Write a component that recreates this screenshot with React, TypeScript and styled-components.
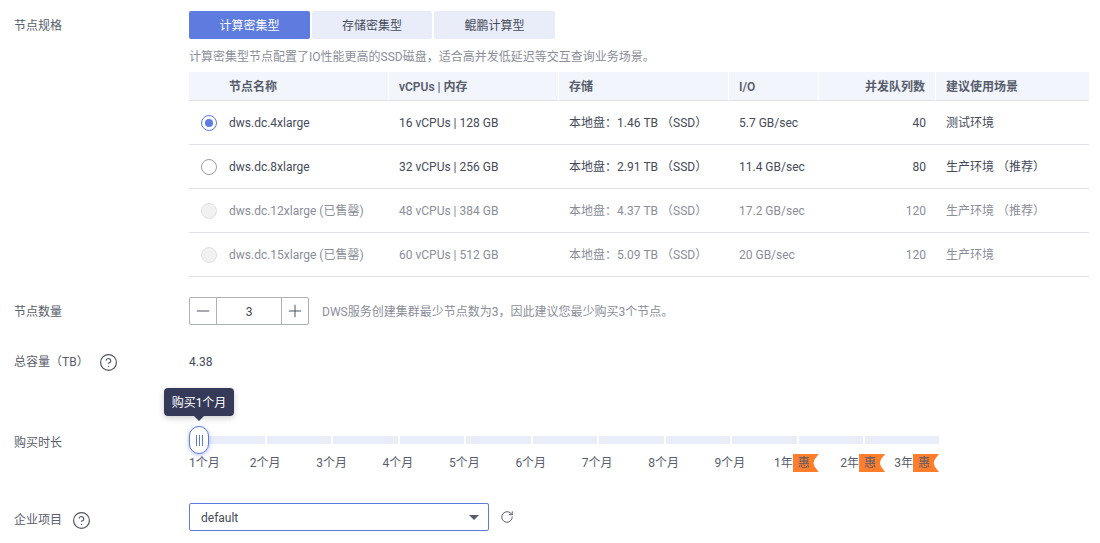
import React from 'react';
import { createGlobalStyle, styled } from 'styled-components';
import { CircleHelp, Minus, Plus, RotateCw } from 'lucide-react';

const GlobalStyle = createGlobalStyle`
    html, body {
        margin: 0;
        padding: 0;
        background: #fff;
    }
    body {
        font-family: Roboto, 'Noto Sans CJK SC', sans-serif;
        font-size: 12px;
        line-height: 20px;
        color: #454a59;
    }
`;

const Page = styled.div`
    width: 1100px;
    height: 543px;
    overflow: hidden;
    box-sizing: border-box;
    padding: 11px 11px 0 14px;
    display: flex;
    flex-direction: column;
`;

const FormRow = styled.div<{ $gap: number }>`
    display: flex;
    align-items: flex-start;
    margin-bottom: ${({ $gap }) => $gap}px;
`;

const Label = styled.div<{ $top?: number }>`
    width: 175px;
    flex: none;
    display: flex;
    align-items: center;
    color: #575d6c;
    padding-top: ${({ $top }) => $top ?? 0}px;
`;

const LabelText = styled.span`
    padding-top: 0;
`;

const HelpIcon = styled(CircleHelp)`
    flex: none;
    margin-left: 10px;
    color: #4f5564;
`;

const Field = styled.div`
    flex: 1;
    min-width: 0;
`;

const Tabs = styled.div`
    display: flex;
    gap: 2px;
`;

const Tab = styled.div<{ $active?: boolean; $width: number }>`
    width: ${({ $width }) => $width}px;
    height: 28px;
    line-height: 30px;
    text-align: center;
    border-radius: 2px;
    background: ${({ $active }) => ($active ? '#5e7ce0' : '#e9edfa')};
    color: ${({ $active }) => ($active ? '#fff' : '#454a59')};
`;

const Description = styled.div`
    margin: 8px 0 5px;
    color: #8a8e99;
`;

const SpecGrid = styled.div`
    display: grid;
    grid-template-columns: 30px 170px 170px 170px 90px 117px 153px;
    width: 900px;
`;

const HeadCell = styled.div<{ $right?: boolean; $sep?: boolean }>`
    height: 28px;
    line-height: 30px;
    padding: 0 10px;
    background: #f2f5fc;
    border-bottom: 1px solid #dfe1e6;
    border-right: ${({ $sep }) => ($sep ? '1px solid #fff' : 'none')};
    font-weight: 600;
    color: #575d6c;
    text-align: ${({ $right }) => ($right ? 'right' : 'left')};
    min-width: 0;
    white-space: nowrap;
`;

const BodyCell = styled.div<{ $right?: boolean; $disabled?: boolean }>`
    height: 43px;
    line-height: 45px;
    padding: 0 10px;
    border-bottom: 1px solid #dfe1e6;
    color: ${({ $disabled }) => ($disabled ? '#8a8e99' : '#454a59')};
    text-align: ${({ $right }) => ($right ? 'right' : 'left')};
    min-width: 0;
    white-space: nowrap;
`;

const RadioCell = styled.div`
    height: 42px;
    padding: 1px 0 0 12px;
    display: flex;
    align-items: center;
    border-bottom: 1px solid #dfe1e6;
`;

const Radio = styled.span<{ $checked?: boolean; $disabled?: boolean }>`
    width: 16px;
    height: 16px;
    flex: none;
    box-sizing: border-box;
    border-radius: 50%;
    display: flex;
    align-items: center;
    justify-content: center;
    background: ${({ $disabled }) => ($disabled ? '#f1f1f3' : '#fff')};
    border: 1px solid ${({ $checked, $disabled }) => ($checked ? '#5e7ce0' : $disabled ? '#dfe1e6' : '#9a9ea8')};

    &::after {
        content: '';
        display: ${({ $checked }) => ($checked ? 'block' : 'none')};
        width: 8px;
        height: 8px;
        border-radius: 50%;
        background: #5e7ce0;
    }
`;

const StepperLine = styled.div`
    display: flex;
    align-items: center;
    gap: 13px;
`;

const Stepper = styled.div`
    width: 120px;
    height: 28px;
    box-sizing: border-box;
    display: flex;
    border: 1px solid #adb0b8;
    border-radius: 2px;
`;

const StepButton = styled.span`
    width: 26px;
    flex: none;
    display: flex;
    align-items: center;
    justify-content: center;
    color: #4f5564;
`;

const StepValue = styled.span`
    flex: 1;
    text-align: center;
    line-height: 28px;
    height: 26px;
    border-left: 1px solid #adb0b8;
    border-right: 1px solid #adb0b8;
`;

const Hint = styled.span`
    padding-top: 2px;
    color: #8a8e99;
`;

const Slider = styled.div`
    position: relative;
    width: 750px;
`;

const Track = styled.div`
    height: 28px;
    padding-left: 11.25px;
    display: flex;
    align-items: center;
    gap: 2px;
`;

const Segment = styled.span<{ $last?: boolean }>`
    flex: ${({ $last }) => ($last ? '1' : 'none')};
    width: 64.5px;
    height: 8px;
    background: #e9edfa;
`;

const Thumb = styled.div`
    position: absolute;
    left: 0;
    top: 0;
    width: 20px;
    height: 28px;
    box-sizing: border-box;
    display: flex;
    align-items: center;
    justify-content: center;
    gap: 2px;
    background: #fff;
    border: 1px solid #5e7ce0;
    border-radius: 10px;
    box-shadow: 0 1px 4px rgba(94, 124, 224, 0.5);
`;

const ThumbBar = styled.span`
    width: 1px;
    height: 11px;
    background: #5e7ce0;
`;

const Tooltip = styled.div`
    position: absolute;
    left: -25px;
    top: -38px;
    width: 70px;
    height: 28px;
    line-height: 30px;
    text-align: center;
    border-radius: 4px;
    background: #343a58;
    color: #fff;
    box-shadow: 0 2px 6px rgba(0, 0, 0, 0.2);

    &::after {
        content: '';
        position: absolute;
        left: 30px;
        bottom: -5px;
        border-style: solid;
        border-width: 5px 5px 0;
        border-color: #343a58 transparent transparent;
    }
`;

const Marks = styled.div`
    display: flex;
    height: 18px;
    line-height: 18px;
`;

const Mark = styled.div<{ $edge?: 'start' | 'end' }>`
    width: ${({ $edge }) => ($edge ? 43 : 66.4)}px;
    flex: none;
    display: flex;
    white-space: nowrap;
    color: #575d6c;
    justify-content: ${({ $edge }) => ($edge === 'start' ? 'flex-start' : $edge === 'end' ? 'flex-end' : 'center')};
`;

const Discount = styled.span`
    width: 26px;
    height: 18px;
    flex: none;
    padding-right: 4px;
    box-sizing: border-box;
    text-align: center;
    background: #ff7d2b;
    color: #575d6c;
    clip-path: polygon(0 0, 100% 0, 84% 30%, 80% 50%, 84% 70%, 100% 100%, 0 100%);
`;

const SelectLine = styled.div`
    display: flex;
    align-items: center;
    gap: 11px;
`;

const Select = styled.div`
    width: 300px;
    height: 28px;
    box-sizing: border-box;
    padding: 0 9px 0 11px;
    display: flex;
    align-items: center;
    justify-content: space-between;
    border: 1px solid #5e7ce0;
    border-radius: 2px;
`;

const SelectValue = styled.span`
    padding-top: 2px;
`;

const Caret = styled.span`
    border-style: solid;
    border-width: 5px 5px 0;
    border-color: #575d6c transparent transparent;
`;

const RefreshIcon = styled(RotateCw)`
    color: #4f5564;
`;

const columns = ['节点名称', 'vCPUs | 内存', '存储', 'I/O', '并发队列数', '建议使用场景'];

const nodes = [
    { name: 'dws.dc.4xlarge', cpu: '16 vCPUs | 128 GB', disk: '1.46 TB', io: '5.7 GB/sec', queues: 40, usage: '测试环境', checked: true },
    { name: 'dws.dc.8xlarge', cpu: '32 vCPUs | 256 GB', disk: '2.91 TB', io: '11.4 GB/sec', queues: 80, usage: '生产环境 （推荐）' },
    { name: 'dws.dc.12xlarge (已售罄)', cpu: '48 vCPUs | 384 GB', disk: '4.37 TB', io: '17.2 GB/sec', queues: 120, usage: '生产环境 （推荐）', disabled: true },
    { name: 'dws.dc.15xlarge (已售罄)', cpu: '60 vCPUs | 512 GB', disk: '5.09 TB', io: '20 GB/sec', queues: 120, usage: '生产环境', disabled: true },
];

const months = ['2个月', '3个月', '4个月', '5个月', '6个月', '7个月', '8个月', '9个月'];

export default function App() {
    return (
        <>
            <GlobalStyle />
            <Page>
                <FormRow $gap={20}>
                    <Label $top={5}>节点规格</Label>
                    <Field>
                        <Tabs>
                            <Tab $active $width={121}>计算密集型</Tab>
                            <Tab $width={120}>存储密集型</Tab>
                            <Tab $width={121}>鲲鹏计算型</Tab>
                        </Tabs>
                        <Description>计算密集型节点配置了IO性能更高的SSD磁盘，适合高并发低延迟等交互查询业务场景。</Description>
                        <SpecGrid>
                            <HeadCell />
                            {columns.map((column, i) => (
                                <HeadCell key={column} $right={i === 4} $sep={i < 5}>
                                    {column}
                                </HeadCell>
                            ))}
                            {nodes.map((node) => (
                                <React.Fragment key={node.name}>
                                    <RadioCell>
                                        <Radio $checked={node.checked} $disabled={node.disabled} />
                                    </RadioCell>
                                    <BodyCell $disabled={node.disabled}>{node.name}</BodyCell>
                                    <BodyCell $disabled={node.disabled}>{node.cpu}</BodyCell>
                                    <BodyCell $disabled={node.disabled}>本地盘：{node.disk} （SSD）</BodyCell>
                                    <BodyCell $disabled={node.disabled}>{node.io}</BodyCell>
                                    <BodyCell $disabled={node.disabled} $right>{node.queues}</BodyCell>
                                    <BodyCell $disabled={node.disabled}>{node.usage}</BodyCell>
                                </React.Fragment>
                            ))}
                        </SpecGrid>
                    </Field>
                </FormRow>

                <FormRow $gap={27}>
                    <Label $top={5}>节点数量</Label>
                    <StepperLine>
                        <Stepper>
                            <StepButton><Minus size={20} strokeWidth={1.2} /></StepButton>
                            <StepValue>3</StepValue>
                            <StepButton><Plus size={20} strokeWidth={1.2} /></StepButton>
                        </Stepper>
                        <Hint>DWS服务创建集群最少节点数为3，因此建议您最少购买3个节点。</Hint>
                    </StepperLine>
                </FormRow>

                <FormRow $gap={54}>
                    <Label>
                        <LabelText>总容量（TB）</LabelText>
                        <HelpIcon size={19} strokeWidth={1.5} />
                    </Label>
                    <Field>4.38</Field>
                </FormRow>

                <FormRow $gap={31}>
                    <Label $top={7}>购买时长</Label>
                    <Slider>
                        <Track>
                            {Array.from({ length: 11 }, (_, i) => (
                                <Segment key={i} $last={i === 10} />
                            ))}
                        </Track>
                        <Thumb>
                            <ThumbBar />
                            <ThumbBar />
                            <ThumbBar />
                        </Thumb>
                        <Tooltip>购买1个月</Tooltip>
                        <Marks>
                            <Mark $edge="start">1个月</Mark>
                            {months.map((month) => (
                                <Mark key={month}>{month}</Mark>
                            ))}
                            <Mark>1年<Discount>惠</Discount></Mark>
                            <Mark>2年<Discount>惠</Discount></Mark>
                            <Mark $edge="end">3年<Discount>惠</Discount></Mark>
                        </Marks>
                    </Slider>
                </FormRow>

                <FormRow $gap={0}>
                    <Label $top={7}>
                        <LabelText>企业项目</LabelText>
                        <HelpIcon size={19} strokeWidth={1.5} />
                    </Label>
                    <SelectLine>
                        <Select>
                            <SelectValue>default</SelectValue>
                            <Caret />
                        </Select>
                        <RefreshIcon size={14} strokeWidth={1.6} />
                    </SelectLine>
                </FormRow>
            </Page>
        </>
    );
}
